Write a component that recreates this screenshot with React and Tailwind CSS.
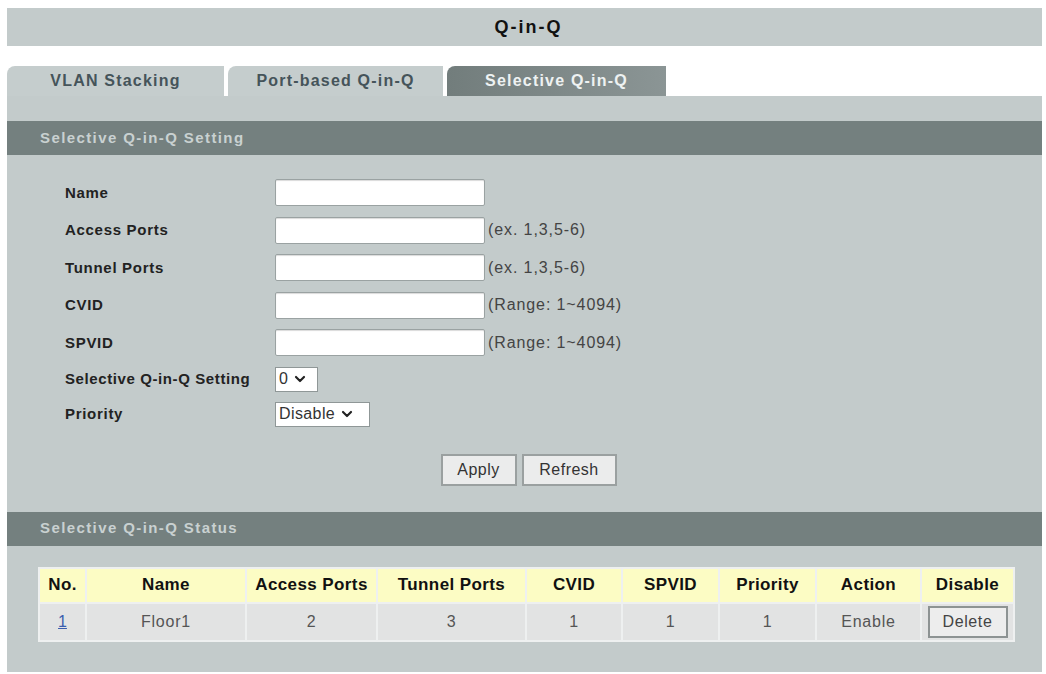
import { ChevronDown } from 'lucide-react'

const FONT = "font-['Liberation_Sans',Arial,sans-serif]"

const fields = [
  { label: 'Name', hint: '' },
  { label: 'Access Ports', hint: '(ex. 1,3,5-6)' },
  { label: 'Tunnel Ports', hint: '(ex. 1,3,5-6)' },
  { label: 'CVID', hint: '(Range: 1~4094)' },
  { label: 'SPVID', hint: '(Range: 1~4094)' },
]

const cols = [
  { key: 'no', title: 'No.', w: 'w-[45px]' },
  { key: 'name', title: 'Name', w: 'w-[158px]' },
  { key: 'access', title: 'Access Ports', w: 'w-[129px]' },
  { key: 'tunnel', title: 'Tunnel Ports', w: 'w-[147px]' },
  { key: 'cvid', title: 'CVID', w: 'w-[94px]' },
  { key: 'spvid', title: 'SPVID', w: 'w-[95px]' },
  { key: 'priority', title: 'Priority', w: 'w-[95px]' },
  { key: 'action', title: 'Action', w: 'w-[103px]' },
  { key: 'disable', title: 'Disable', w: 'w-[91px]' },
]

const rows = [
  { no: '1', name: 'Floor1', access: '2', tunnel: '3', cvid: '1', spvid: '1', priority: '1', action: 'Enable' },
]

function SectionBar({ children }) {
  return (
    <div className="h-[34px] bg-[#74807f] flex items-center pl-[33px]">
      <span className="text-[15px] font-bold tracking-[1.4px] text-[#c9d1d1]">{children}</span>
    </div>
  )
}

function Select({ value, width }) {
  return (
    <div className={`${width} h-[25px] bg-white border border-[#8f9797] flex items-center gap-[4px] pl-[3px]`}>
      <span className="text-[16px] tracking-[0.4px] text-[#333]">{value}</span>
      <ChevronDown size={16} strokeWidth={3.2} className="text-[#222]" />
    </div>
  )
}

function Tab({ label, active, width }) {
  return (
    <div
      className={`${width} h-[30px] rounded-tl-[8px] flex items-center justify-center text-[16px] font-bold tracking-[1.2px]
        ${active ? 'bg-gradient-to-r from-[#727d7c] to-[#8b9595] text-[#eef2f2]' : 'bg-[#c5cdcd] text-[#45545a]'}`}
    >
      {label}
    </div>
  )
}

export default function App() {
  return (
    <div className={`${FONT} w-[1046px] h-[674px] bg-white pt-[8px] pl-[7px] pr-[4px]`}>
      <div className="h-[38px] bg-[#c3cbcb] flex items-center justify-center pl-[8px]">
        <span className="text-[18px] font-bold tracking-[2px] text-[#111]">Q-in-Q</span>
      </div>

      <div className="mt-[20px] flex gap-[4px]">
        <Tab label="VLAN Stacking" width="w-[217px]" />
        <Tab label="Port-based Q-in-Q" width="w-[215px]" />
        <Tab label="Selective Q-in-Q" width="w-[219px]" active />
      </div>

      <div className="bg-[#c3cbcb] h-[576px] pt-[25px]">
        <SectionBar>Selective Q-in-Q Setting</SectionBar>

        <div className="pt-[19px] pl-[58px]">
          {fields.map((f) => (
            <div key={f.label} className="h-[37.5px] flex items-center">
              <span className="w-[210px] text-[15px] font-bold tracking-[0.7px] text-[#222]">{f.label}</span>
              <div className="w-[210px] h-[27px] bg-white border border-[#9aa2a2] rounded-[2px] shadow-[inset_0_1px_1px_rgba(0,0,0,0.15)]" />
              {f.hint && (
                <span className="ml-[3px] text-[16px] tracking-[0.9px] text-[#444]">{f.hint}</span>
              )}
            </div>
          ))}
          <div className="h-[35px] flex items-center">
            <span className="w-[210px] text-[15px] font-bold tracking-[0.6px] text-[#222]">Selective Q-in-Q Setting</span>
            <Select value="0" width="w-[43px]" />
          </div>
          <div className="h-[35px] flex items-center">
            <span className="w-[210px] text-[15px] font-bold tracking-[0.7px] text-[#222]">Priority</span>
            <Select value="Disable" width="w-[95px]" />
          </div>
        </div>

        <div className="mt-[22px] flex justify-center gap-[5px] pl-[8px]">
          <button className="w-[76px] h-[32px] bg-[#ebecec] border-2 border-[#9aa0a0] text-[16px] tracking-[0.5px] text-[#333]">
            Apply
          </button>
          <button className="w-[95px] h-[32px] bg-[#ebecec] border-2 border-[#9aa0a0] text-[16px] tracking-[0.5px] text-[#333]">
            Refresh
          </button>
        </div>

        <div className="mt-[26px]">
          <SectionBar>Selective Q-in-Q Status</SectionBar>
        </div>

        <div className="pt-[21px] pl-[31px]">
          <table className="border-separate border-spacing-[2px] bg-[#eef0f0]">
            <thead>
              <tr>
                {cols.map((c) => (
                  <th key={c.key} className={`${c.w} h-[33px] bg-[#fcfcc4] text-[17px] font-bold tracking-[0.4px] text-[#111]`}>
                    {c.title}
                  </th>
                ))}
              </tr>
            </thead>
            <tbody>
              {rows.map((r) => (
                <tr key={r.no}>
                  <td className="h-[36px] bg-[#e2e3e3] text-center text-[16px]">
                    <a className="text-[#3a5dae] underline">{r.no}</a>
                  </td>
                  {['name', 'access', 'tunnel', 'cvid', 'spvid', 'priority', 'action'].map((k) => (
                    <td key={k} className="bg-[#e2e3e3] text-center text-[16px] tracking-[0.8px] text-[#555]">
                      {r[k]}
                    </td>
                  ))}
                  <td className="bg-[#e2e3e3] text-center">
                    <button className="w-[80px] h-[32px] bg-[#ededed] border-2 border-[#8d9393] text-[16px] tracking-[0.6px] text-[#444]">
                      Delete
                    </button>
                  </td>
                </tr>
              ))}
            </tbody>
          </table>
        </div>
      </div>
    </div>
  )
}
